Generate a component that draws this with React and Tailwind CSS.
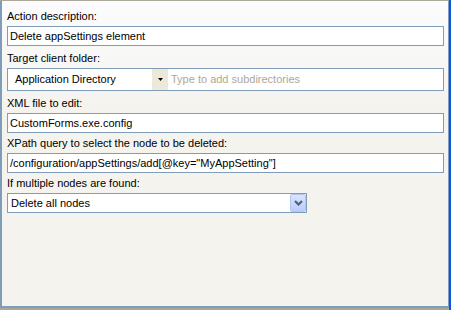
import React from 'react';

const font = { fontFamily: '"Liberation Sans", Arial, sans-serif' };

const Label = ({ children, className = '' }) => (
    <div className={`h-[13px] leading-[15px] text-[11px] text-black whitespace-nowrap ${className}`}>{children}</div>
);

const TextBox = ({ value, className = '' }) => (
    <div className={`h-[20px] border border-[#7f9db9] bg-white flex items-center pl-[2px] text-[11px] text-black whitespace-nowrap ${className}`}>
        {value}
    </div>
);

const App = () => {
    return (
        <div className="w-[451px] h-[310px] flex overflow-hidden bg-[#f4f3ee]" style={font}>
            <div className="flex-1 flex flex-col">
                <div className="h-[1px] bg-[#aca899]" />
                <div className="flex-1 flex flex-col border-l-2 border-r border-b-2 border-[#7f9db9] bg-[linear-gradient(to_bottom,#fcfcfe,#f4f3ee_110px,#f4f3ee)] pl-[5px] pr-[4px] pt-[8px]">
                    {/* Action description */}
                    <Label>Action description:</Label>
                    <TextBox className="mt-[4px]" value="Delete appSettings element" />

                    {/* Target client folder */}
                    <Label className="mt-[5px]">Target client folder:</Label>
                    <div className="mt-[4px] h-[23px] border border-[#7f9db9] bg-white flex items-stretch text-[11px]">
                        <div className="w-[144px] flex items-center pl-[7px] text-black whitespace-nowrap">Application Directory</div>
                        <div className="w-[16px] bg-[#ece9d8] flex items-center justify-center">
                            <svg width="5" height="3" viewBox="0 0 5 3">
                                <polygon points="0,0 5,0 2.5,3" fill="#000" />
                            </svg>
                        </div>
                        <div className="flex items-center pl-[3px] text-[#aca899] whitespace-nowrap">Type to add subdirectories</div>
                    </div>

                    {/* XML file */}
                    <Label className="mt-[5px]">XML file to edit:</Label>
                    <TextBox className="mt-[4px]" value="CustomForms.exe.config" />

                    {/* XPath */}
                    <Label className="mt-[3px]">XPath query to select the node to be deleted:</Label>
                    <TextBox className="mt-[4px]" value={'/configuration/appSettings/add[@key="MyAppSetting"]'} />

                    {/* Multiple nodes */}
                    <Label className="mt-[3px]">If multiple nodes are found:</Label>
                    <div className="mt-[4px] w-[300px] h-[20px] border border-[#7f9db9] bg-white flex items-center text-[11px] text-black">
                        <div className="flex-1 pl-[3px] whitespace-nowrap">Delete all nodes</div>
                        <div className="w-[16px] h-[18px] rounded-[2px] border border-[#b4c6f0] bg-[linear-gradient(to_bottom,#d9e4fd,#bccdf8)] flex items-center justify-center">
                            <svg width="9" height="6" viewBox="0 0 9 6">
                                <polyline points="1,1 4.5,4.5 8,1" fill="none" stroke="#4d6185" strokeWidth="2.2" />
                            </svg>
                        </div>
                    </div>
                </div>
                <div className="h-[2px] bg-[#aca899]" />
            </div>
            <div className="w-[2px] bg-[#0c54e8]" />
        </div>
    );
};

export default App;
